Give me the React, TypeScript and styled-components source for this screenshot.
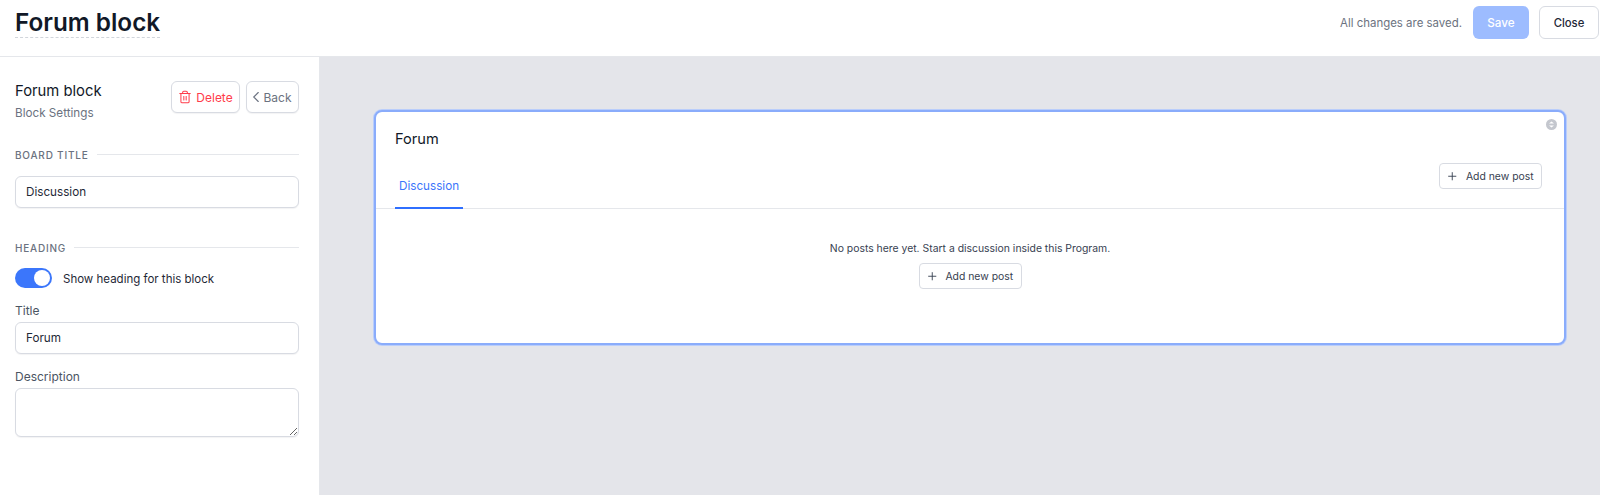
import styled, { createGlobalStyle } from 'styled-components';
import { ChevronLeft, Plus, Trash2 } from 'lucide-react';

const GlobalStyle = createGlobalStyle`
  * {
    box-sizing: border-box;
  }
  html,
  body {
    margin: 0;
    height: 100%;
    overflow: hidden;
    background: #ffffff;
    font-family: Inter, 'Liberation Sans', sans-serif;
  }
`;

const Page = styled.div`
  width: 1600px;
  height: 495px;
  display: flex;
  flex-direction: column;
`;

const Header = styled.header`
  height: 57px;
  flex: none;
  display: flex;
  align-items: flex-start;
  justify-content: space-between;
  padding: 6px 1px 0 15px;
  border-bottom: 1px solid #e5e7eb;
`;

const PageTitle = styled.h1`
  margin: 0;
  height: 32px;
  font-size: 24.3px;
  line-height: 32px;
  font-weight: 600;
  color: #111827;
  border-bottom: 1px dashed #d1d5db;
`;

const HeaderActions = styled.div`
  display: flex;
  align-items: center;
  height: 33px;
`;

const SavedNote = styled.span`
  font-size: 11.45px;
  color: #6b7280;
  margin-right: 11px;
`;

const SaveButton = styled.button`
  width: 56px;
  height: 33px;
  border: none;
  border-radius: 6px;
  background: #9dbcff;
  color: #ffffff;
  font: 500 11.7px Inter, sans-serif;
  margin-right: 10px;
  padding: 0;
`;

const CloseButton = styled.button`
  width: 60px;
  height: 33px;
  border: 1px solid #d8dbe2;
  border-radius: 6px;
  background: #ffffff;
  color: #1f2937;
  font: 500 11.3px Inter, sans-serif;
  padding: 0;
`;

const Body = styled.div`
  flex: 1;
  display: flex;
  min-height: 0;
`;

const Sidebar = styled.aside`
  width: 320px;
  flex: none;
  padding: 24px 20px 0 15px;
  border-right: 1px solid #e5e7eb;
  background: #ffffff;
`;

const SidebarTop = styled.div`
  display: flex;
  align-items: flex-start;
  justify-content: space-between;
  margin-bottom: 26.5px;
`;

const BlockName = styled.div`
  font-size: 14.8px;
  line-height: 20px;
  color: #111827;
`;

const BlockHint = styled.div`
  font-size: 11.7px;
  line-height: 16px;
  color: #6b7280;
  margin-top: 4px;
`;

const SidebarActions = styled.div`
  display: flex;
  gap: 6px;
`;

const SmallButton = styled.button<{ $danger?: boolean; $width: number }>`
  width: ${(p) => p.$width}px;
  height: 32px;
  display: flex;
  align-items: center;
  justify-content: center;
  gap: 4px;
  padding: 0;
  border: 1px solid #d8dbe2;
  border-radius: 6px;
  background: #ffffff;
  color: ${(p) => (p.$danger ? '#ff3b4a' : '#6b7280')};
  font: 400 12px Inter, sans-serif;
  box-shadow: 0 1px 1px rgba(17, 24, 39, 0.05);
`;

const BackChevron = styled(ChevronLeft)`
  margin: 0 -6px 0 -6px;
`;

const SectionLabel = styled.div`
  display: flex;
  align-items: center;
  gap: 8px;
  height: 14px;
  font-size: 10px;
  font-weight: 500;
  letter-spacing: 0.8px;
  text-transform: uppercase;
  color: #6b7280;
  &::after {
    content: '';
    flex: 1;
    height: 1px;
    background: #e5e7eb;
  }
`;

const TextInput = styled.input`
  display: block;
  width: 100%;
  height: 32px;
  padding: 0 10px;
  border: 1px solid #d8dbe2;
  border-radius: 6px;
  background: #ffffff;
  color: #1f2937;
  font: 400 11.7px Inter, sans-serif;
  outline: none;
  box-shadow: 0 1px 1px rgba(17, 24, 39, 0.05);
`;

const BoardSection = styled.section`
  margin-bottom: 33px;
  ${TextInput} {
    margin-top: 14px;
  }
`;

const ToggleRow = styled.div`
  display: flex;
  align-items: center;
  gap: 11px;
  margin-top: 13.5px;
  font-size: 11.5px;
  color: #1f2937;
`;

const ToggleText = styled.span`
  margin-top: 2px;
`;

const Toggle = styled.span`
  width: 37px;
  height: 20px;
  padding: 2px;
  display: flex;
  justify-content: flex-end;
  border-radius: 10px;
  background: #3b76fb;
  &::after {
    content: '';
    width: 16px;
    height: 16px;
    border-radius: 50%;
    background: #ffffff;
  }
`;

const FieldLabel = styled.label`
  display: block;
  font-size: 12px;
  line-height: 16px;
  color: #4b5563;
  margin: 15px 0 3px;
`;

const TextArea = styled.textarea`
  display: block;
  width: 100%;
  height: 49px;
  padding: 8px 10px;
  border: 1px solid #d8dbe2;
  border-radius: 6px;
  background: #ffffff;
  outline: none;
  font: 400 12px Inter, sans-serif;
  box-shadow: 0 1px 1px rgba(17, 24, 39, 0.05);
`;

const Canvas = styled.main`
  flex: 1;
  background: #e4e5ea;
  padding: 53px 34px 0 54px;
`;

const Card = styled.div`
  position: relative;
  height: 235px;
  background: #ffffff;
  border: 2px solid #8aacfb;
  border-radius: 8px;
  box-shadow: 0 0 0 1px #b9cdfb;
  overflow: hidden;
`;

const CardTitle = styled.div`
  padding: 17px 0 0 19px;
  height: 49px;
  font-size: 14.6px;
  line-height: 20px;
  color: #111827;
`;

const BlockBadge = styled.svg`
  position: absolute;
  top: 7px;
  right: 7px;
  width: 11px;
  height: 11px;
`;

const TabBar = styled.div`
  height: 48px;
  display: flex;
  align-items: flex-start;
  justify-content: space-between;
  padding: 0 22px 0 19px;
  border-bottom: 1px solid #e5e7eb;
`;

const Tab = styled.div`
  height: 48px;
  padding: 4px 4px 0;
  display: flex;
  align-items: center;
  font-size: 11.7px;
  color: #3b76fb;
  border-bottom: 2px solid #2f6fff;
`;

const AddButton = styled.button`
  width: 103px;
  height: 26px;
  display: flex;
  align-items: center;
  justify-content: center;
  gap: 7px;
  padding: 0 1px 0 0;
  border: 1px solid #d8dbe2;
  border-radius: 4px;
  background: #ffffff;
  color: #374151;
  font: 400 10.4px Inter, sans-serif;
`;

const TabAddButton = styled(AddButton)`
  margin-top: 2px;
`;

const EmptyState = styled.div`
  display: flex;
  flex-direction: column;
  align-items: center;
  gap: 6px;
  padding-top: 32px;
  font-size: 10.4px;
  line-height: 16px;
  color: #374151;
`;

export default function App() {
  return (
    <Page>
      <GlobalStyle />
      <Header>
        <PageTitle>Forum block</PageTitle>
        <HeaderActions>
          <SavedNote>All changes are saved.</SavedNote>
          <SaveButton>Save</SaveButton>
          <CloseButton>Close</CloseButton>
        </HeaderActions>
      </Header>
      <Body>
        <Sidebar>
          <SidebarTop>
            <div>
              <BlockName>Forum block</BlockName>
              <BlockHint>Block Settings</BlockHint>
            </div>
            <SidebarActions>
              <SmallButton $danger $width={69}>
                <Trash2 size={14} strokeWidth={1.75} />
                Delete
              </SmallButton>
              <SmallButton $width={53}>
                <BackChevron size={18} strokeWidth={1.5} />
                Back
              </SmallButton>
            </SidebarActions>
          </SidebarTop>
          <BoardSection>
            <SectionLabel>Board title</SectionLabel>
            <TextInput readOnly value="Discussion" />
          </BoardSection>
          <section>
            <SectionLabel>Heading</SectionLabel>
            <ToggleRow>
              <Toggle />
              <ToggleText>Show heading for this block</ToggleText>
            </ToggleRow>
            <FieldLabel>Title</FieldLabel>
            <TextInput readOnly value="Forum" />
            <FieldLabel>Description</FieldLabel>
            <TextArea readOnly />
          </section>
        </Sidebar>
        <Canvas>
          <Card>
            <BlockBadge viewBox="0 0 11 11">
              <circle cx="5.5" cy="5.5" r="5.5" fill="#c4c7ce" />
              <path d="M3 4.6 L5.5 2.6 L8 4.6 Z M3 6.4 L8 6.4 L5.5 8.4 Z" fill="#ffffff" />
            </BlockBadge>
            <CardTitle>Forum</CardTitle>
            <TabBar>
              <Tab>Discussion</Tab>
              <TabAddButton>
                <Plus size={12.5} strokeWidth={1.75} />
                Add new post
              </TabAddButton>
            </TabBar>
            <EmptyState>
              No posts here yet. Start a discussion inside this Program.
              <AddButton>
                <Plus size={12.5} strokeWidth={1.75} />
                Add new post
              </AddButton>
            </EmptyState>
          </Card>
        </Canvas>
      </Body>
    </Page>
  );
}
